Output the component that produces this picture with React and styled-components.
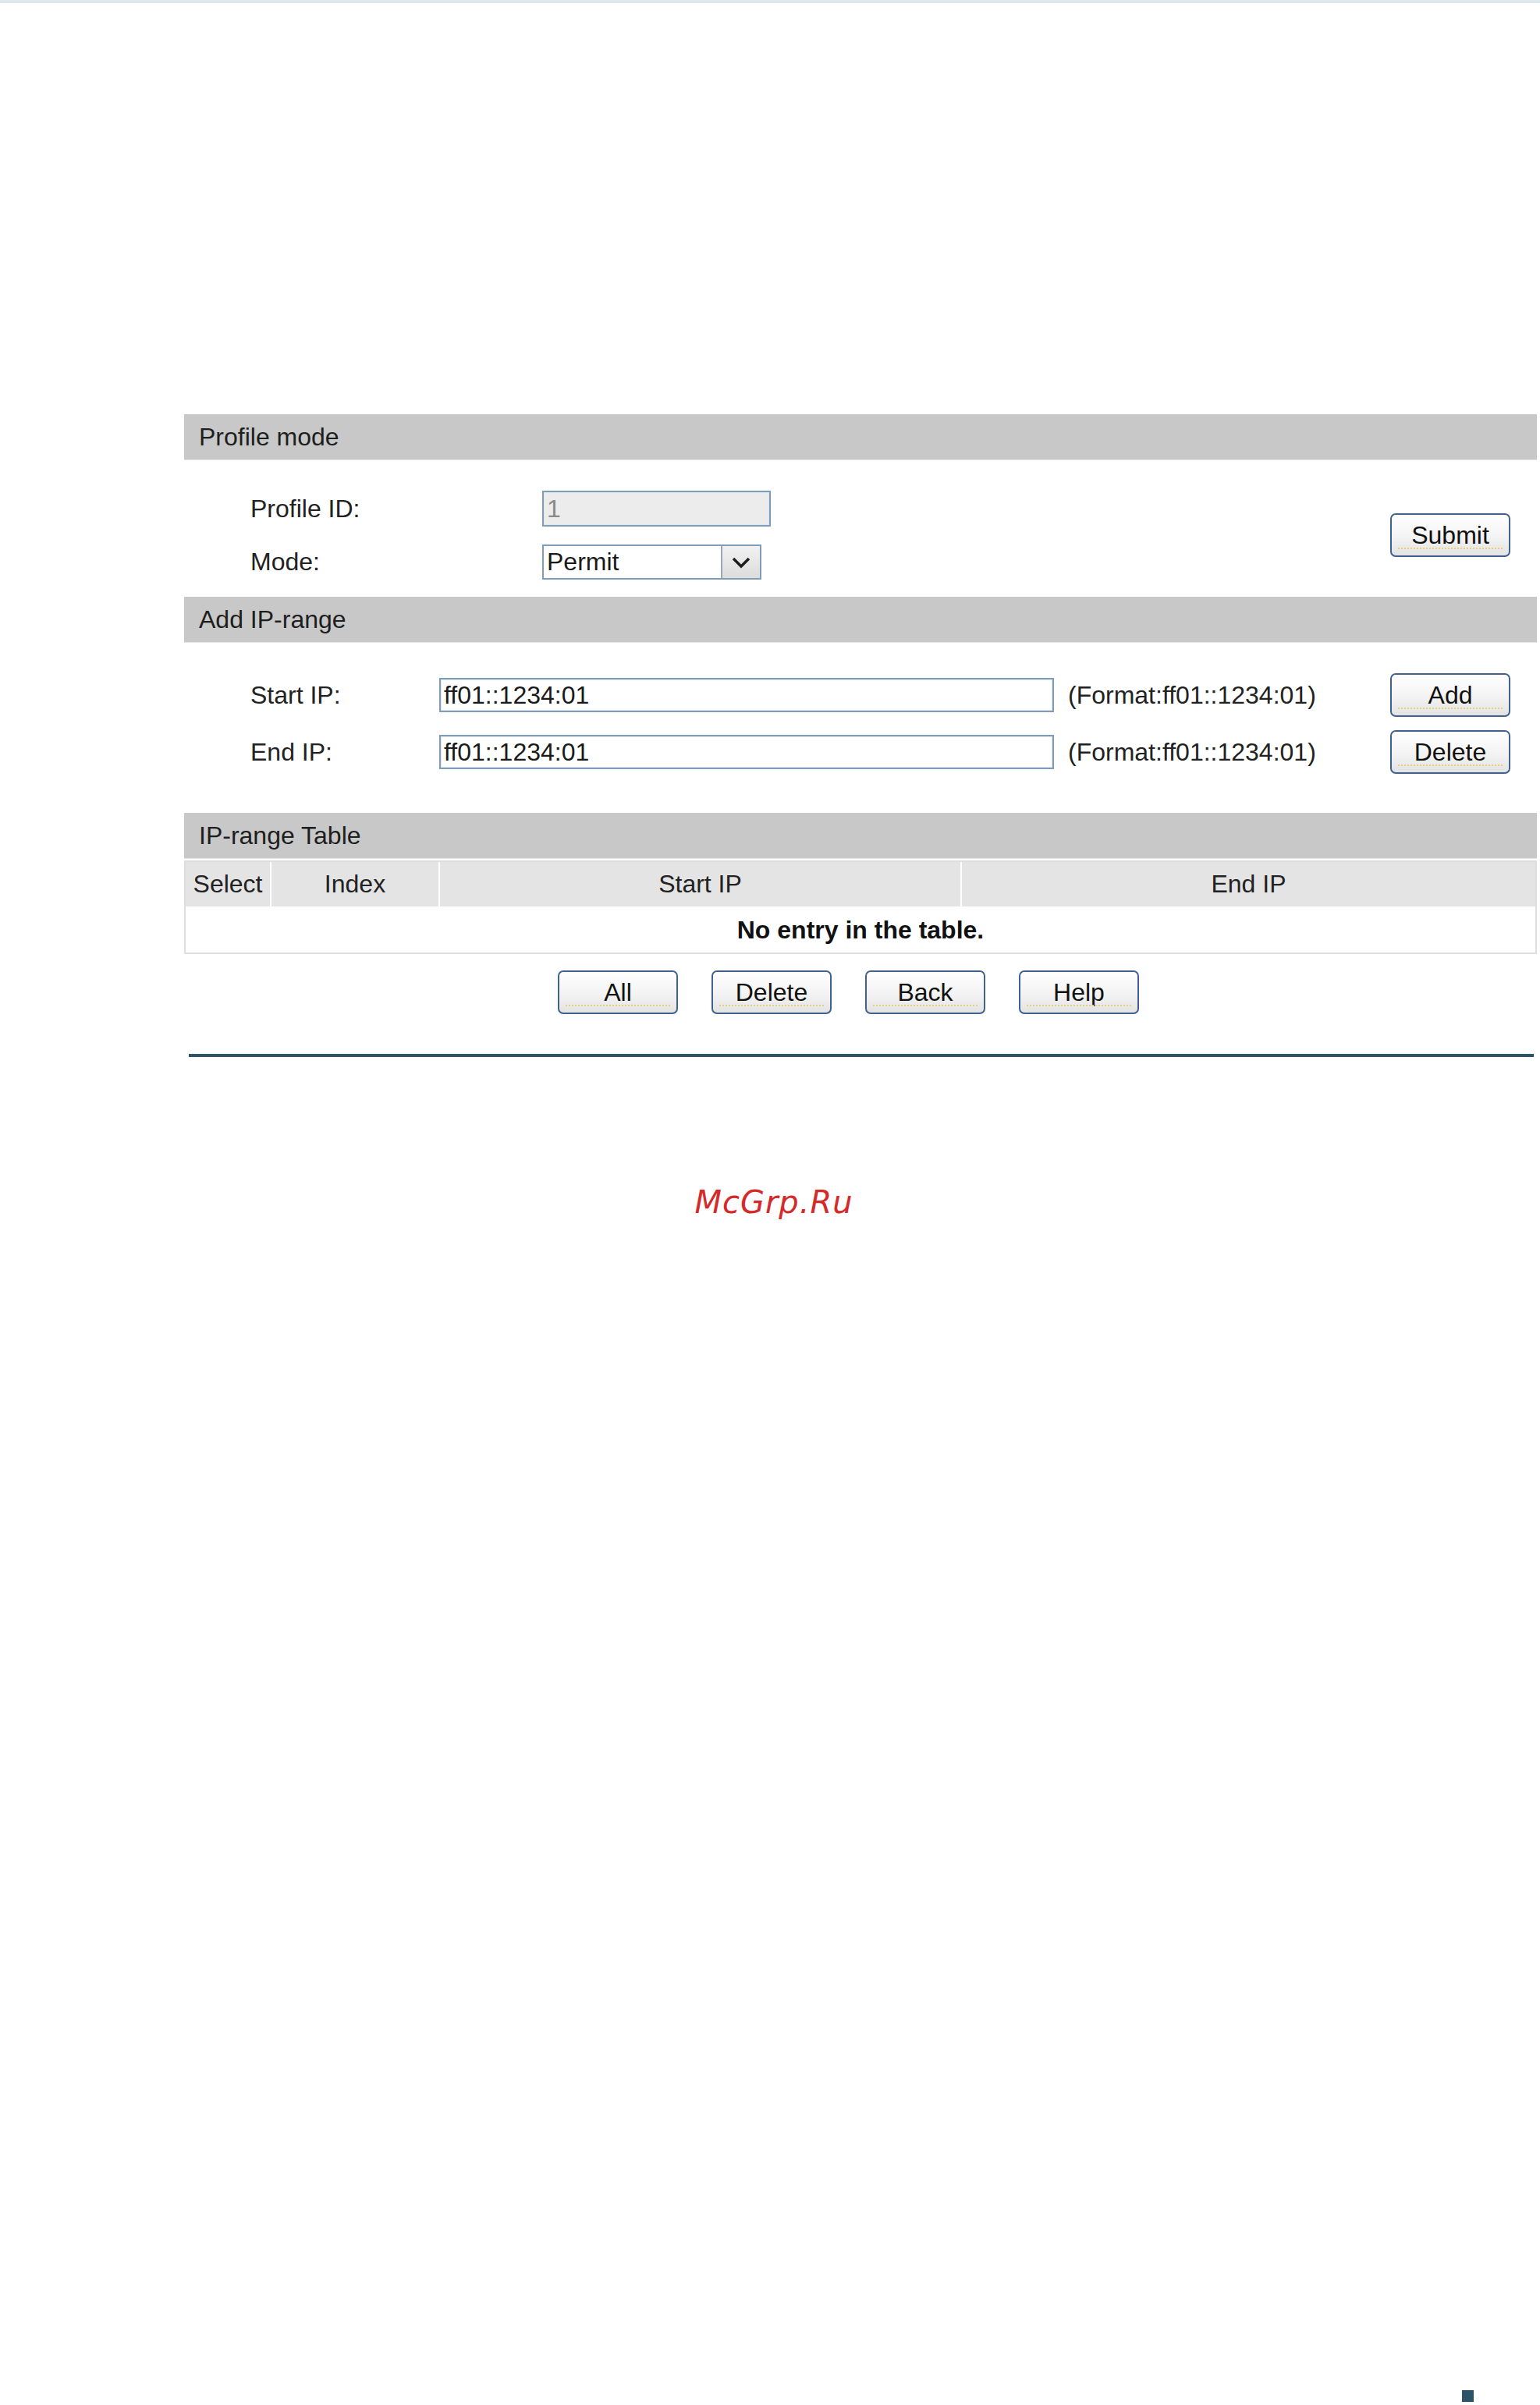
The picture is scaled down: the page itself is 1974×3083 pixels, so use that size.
import React from "react";
import styled, { createGlobalStyle } from "styled-components";

const GlobalStyle = createGlobalStyle`
  html, body { margin: 0; padding: 0; background: #ffffff; }
  body { font-family: "Liberation Sans", Arial, sans-serif; color: #1c1c1c; }
  * { box-sizing: border-box; }
`;

const FONT = 32;

const Page = styled.div`
  min-height: 3083px;
  display: flex;
  flex-direction: column;
`;

const TopBar = styled.div`
  height: 4px;
  background: #dde7ed;
`;

const Panel = styled.div`
  margin: 527px 0 0 236px;
  width: 1734px;
`;

const SectionHeader = styled.div`
  height: 59px;
  background: #c8c8c8;
  font-size: ${FONT}px;
  padding-left: 19px;
  display: flex;
  align-items: center;
  color: #1e1e1e;
  border-bottom: 1px solid #e4e4e4;
`;

const SectionBody = styled.div`
  display: flex;
  align-items: center;
  padding: ${(p) => p.$pad};
`;

const FormCol = styled.div`
  display: flex;
  flex-direction: column;
  gap: ${(p) => p.$gap}px;
  flex: 1;
`;

const Row = styled.div`
  display: flex;
  align-items: center;
  height: ${(p) => p.$h}px;
`;

const Label = styled.div`
  width: ${(p) => p.$w}px;
  font-size: ${FONT}px;
  color: #222;
`;

const TextInput = styled.input`
  width: ${(p) => p.$w}px;
  height: ${(p) => p.$h}px;
  border: 2px solid #7f9db9;
  box-shadow: inset 0 0 0 1px #dfe8f0;
  background: ${(p) => (p.$disabled ? "#ececec" : "#ffffff")};
  color: ${(p) => (p.$disabled ? "#8a8a8a" : "#1a1a1a")};
  font-family: "Liberation Sans", Arial, sans-serif;
  font-size: ${FONT}px;
  padding: 0 0 0 4px;
  outline: none;
  margin: 0;
`;

const SelectBox = styled.div`
  width: 281px;
  height: 45px;
  border: 2px solid #7f9db9;
  background: #fff;
  display: flex;
  align-items: stretch;
`;

const SelectValue = styled.div`
  flex: 1;
  font-size: ${FONT}px;
  padding-left: 4px;
  display: flex;
  align-items: center;
  color: #1a1a1a;
`;

const SelectArrow = styled.div`
  width: 50px;
  background: linear-gradient(#f2f2f2, #dcdcdc);
  border-left: 2px solid #9aa8b6;
  display: flex;
  align-items: center;
  justify-content: center;
`;

const Hint = styled.div`
  margin-left: 18px;
  font-size: ${FONT}px;
  color: #222;
  white-space: nowrap;
`;

const Spacer = styled.div`
  flex: 1;
`;

const Button = styled.button`
  position: relative;
  width: 154px;
  height: 56px;
  border: 2px solid #41618f;
  border-radius: 7px;
  background: linear-gradient(#ffffff 0%, #f3f3f3 55%, #e3e3e3 100%);
  font-family: "Liberation Sans", Arial, sans-serif;
  font-size: ${FONT}px;
  color: #111;
  padding: 0;
  cursor: pointer;
  &::after {
    content: "";
    position: absolute;
    left: 8px;
    right: 8px;
    bottom: 8px;
    border-bottom: 2px dotted #e9cf7a;
  }
`;

const TableBox = styled.div`
  margin-top: 2px;
  border: 2px solid #dedede;
`;

const HeadRow = styled.div`
  display: grid;
  grid-template-columns: 108px 214px 667px 1fr;
  gap: 2px;
  background: #ffffff;
`;

const HeadCell = styled.div`
  height: 57px;
  background: #e4e4e4;
  font-size: ${FONT}px;
  color: #222;
  display: flex;
  align-items: center;
  justify-content: center;
`;

const EmptyRow = styled.div`
  height: 59px;
  border-top: 2px solid #ffffff;
  font-size: ${FONT}px;
  font-weight: bold;
  display: flex;
  align-items: center;
  justify-content: center;
  color: #111;
`;

const ActionBar = styled.div`
  display: flex;
  gap: 43px;
  padding-left: 479px;
  margin-top: 21px;
`;

const Divider = styled.div`
  margin: 51px 4px 0 6px;
  height: 4px;
  background: #2b5468;
`;

const Watermark = styled.div`
  margin-top: 162px;
  width: 1974px;
  padding-left: 10px;
  text-align: center;
  font-family: "DejaVu Sans", sans-serif;
  font-style: italic;
  font-size: 40px;
  line-height: 48px;
  color: #d42a2a;
  letter-spacing: 1px;
`;

const Corner = styled.div`
  margin: auto 0 4px 1874px;
  width: 15px;
  height: 15px;
  background: #2b5468;
`;

const Chevron = () => (
  <svg width="24" height="16" viewBox="0 0 24 16">
    <polyline points="2,3 12,13 22,3" fill="none" stroke="#1e1e1e" strokeWidth="3.5" />
  </svg>
);

export default function App() {
  return (
    <>
      <GlobalStyle />
      <Page>
        <TopBar />
        <Panel>
          <SectionHeader>Profile mode</SectionHeader>
          <SectionBody $pad="39px 34px 22px 85px">
            <FormCol $gap={23}>
              <Row $h={46}>
                <Label $w={374}>Profile ID:</Label>
                <TextInput $w={293} $h={46} $disabled readOnly value="1" />
              </Row>
              <Row $h={45}>
                <Label $w={374}>Mode:</Label>
                <SelectBox>
                  <SelectValue>Permit</SelectValue>
                  <SelectArrow>
                    <Chevron />
                  </SelectArrow>
                </SelectBox>
              </Row>
            </FormCol>
            <Button>Submit</Button>
          </SectionBody>

          <SectionHeader>Add IP-range</SectionHeader>
          <SectionBody $pad="39px 34px 50px 85px">
            <FormCol $gap={17}>
              <Row $h={56}>
                <Label $w={242}>Start IP:</Label>
                <TextInput $w={788} $h={44} readOnly value="ff01::1234:01" />
                <Hint>(Format:ff01::1234:01)</Hint>
                <Spacer />
                <Button>Add</Button>
              </Row>
              <Row $h={56}>
                <Label $w={242}>End IP:</Label>
                <TextInput $w={788} $h={44} readOnly value="ff01::1234:01" />
                <Hint>(Format:ff01::1234:01)</Hint>
                <Spacer />
                <Button>Delete</Button>
              </Row>
            </FormCol>
          </SectionBody>

          <SectionHeader>IP-range Table</SectionHeader>
          <TableBox>
            <HeadRow>
              <HeadCell>Select</HeadCell>
              <HeadCell>Index</HeadCell>
              <HeadCell>Start IP</HeadCell>
              <HeadCell>End IP</HeadCell>
            </HeadRow>
            <EmptyRow>No entry in the table.</EmptyRow>
          </TableBox>

          <ActionBar>
            <Button>All</Button>
            <Button>Delete</Button>
            <Button>Back</Button>
            <Button>Help</Button>
          </ActionBar>
          <Divider />
        </Panel>
        <Watermark>McGrp.Ru</Watermark>
        <Corner />
      </Page>
    </>
  );
}
